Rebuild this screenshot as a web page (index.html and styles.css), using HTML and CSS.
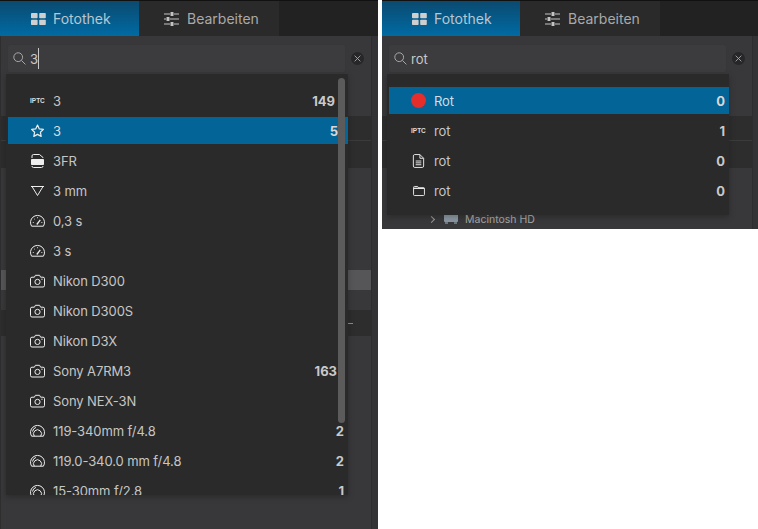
FILE: index.html
```html
<!DOCTYPE html>
<html lang="de">
<head>
<meta charset="utf-8">
<title>Fotothek</title>
<link rel="stylesheet" href="styles.css">
</head>
<body>
<svg class="defs" aria-hidden="true">
  <symbol id="i-grid" viewBox="0 0 15 12"><rect x="0" y="0" width="6.6" height="5.2" rx=".8"/><rect x="8.2" y="0" width="6.6" height="5.2" rx=".8"/><rect x="0" y="6.8" width="6.6" height="5.2" rx=".8"/><rect x="8.2" y="6.8" width="6.6" height="5.2" rx=".8"/></symbol>
  <symbol id="i-sliders" viewBox="0 0 15 14"><path d="M0 2h6M10 2h5M0 7h2M6 7h9M0 12h6M10 12h5" fill="none" stroke="currentColor"/><rect x="6.5" y="0" width="3" height="4" rx=".6" fill="currentColor"/><rect x="2.5" y="5" width="3" height="4" rx=".6" fill="currentColor"/><rect x="6.5" y="10" width="3" height="4" rx=".6" fill="currentColor"/></symbol>
  <symbol id="i-search" viewBox="0 0 13 13"><circle cx="5.2" cy="5.2" r="4.4" fill="none" stroke="currentColor"/><path d="M8.4 8.4l4 4" stroke="currentColor" fill="none"/></symbol>
  <symbol id="i-x" viewBox="0 0 8 8"><path d="M.7.7l6.6 6.6M7.3.7L.7 7.3" stroke="currentColor" fill="none"/></symbol>
  <symbol id="i-star" viewBox="0 0 14 14"><path d="M7 1.1l1.8 3.8 4.1.5-3 2.9.8 4.1L7 10.4l-3.7 2 .8-4.1-3-2.9 4.1-.5z" fill="none" stroke="currentColor" stroke-width="1.2" stroke-linejoin="round"/></symbol>
  <symbol id="i-raw" viewBox="0 0 14 14"><path d="M1.5 4V2A1.5 1.5 0 0 1 3 .5h6l3.500 3V4M1.500 12A1.500 1.500 0 0 0 3 13.500h8a1.500 1.500 0 0 0 1.500-1.500" fill="none" stroke="currentColor"/><rect x="0.500" y="5" width="13" height="6" rx=".8" fill="currentColor"/></symbol>
  <symbol id="i-focal" viewBox="0 0 14 14"><path d="M.5 2.500h13M1.500 2.500L7 11.500l5.500-9" fill="none" stroke="currentColor"/></symbol>
  <symbol id="i-gauge" viewBox="0 0 15 12"><path d="M1.600 11.200A7 7 0 1 1 13.400 11.200z" fill="none" stroke="currentColor" stroke-linejoin="round"/><path d="M6.800 9.500l3.500-4.700" stroke="currentColor" stroke-width="1.300" fill="none"/><path d="M2.800 7.500h.9M4.200 3.800l.6.6M7.500 2.300v.9M11.400 7.500h.9" stroke="currentColor" fill="none"/></symbol>
  <symbol id="i-camera" viewBox="0 0 15 13"><path d="M2 2.700h2.400L5.400.8h4.200l1 1.900H13a1.500 1.500 0 0 1 1.500 1.500v6.800A1.500 1.500 0 0 1 13 12.500H2A1.500 1.500 0 0 1 .5 11V4.200A1.500 1.500 0 0 1 2 2.700z" fill="none" stroke="currentColor" stroke-linejoin="round"/><circle cx="7.500" cy="7.400" r="2.600" fill="none" stroke="currentColor"/><rect x="11.300" y="4.200" width="1.300" height="1" fill="currentColor"/></symbol>
  <symbol id="i-lens" viewBox="0 0 15 12"><path d="M1.600 11.200A7 7 0 1 1 13.400 11.200z" fill="none" stroke="currentColor" stroke-linejoin="round"/><path d="M4.300 11.200A4 4 0 1 1 10.700 11.200" fill="none" stroke="currentColor"/><path d="M2.500 6.500A5.200 5.200 0 0 1 6 2.400" fill="none" stroke="currentColor"/></symbol>
  <symbol id="i-doc" viewBox="0 0 12 15"><path d="M1.800.6h5.700l4 4v8.300a1.500 1.500 0 0 1-1.500 1.500H2a1.500 1.500 0 0 1-1.500-1.500V2A1.500 1.500 0 0 1 1.800.6zM7.500.6v4h4" fill="none" stroke="currentColor" stroke-linejoin="round"/><path d="M3 7.500h6M3 9.500h6M3 11.500h6" stroke="currentColor" fill="none"/></symbol>
  <symbol id="i-folder" viewBox="0 0 13 11"><path d="M1.600.6h3.400l1.200 1.400h5.200a1 1 0 0 1 1 1v6.400a1 1 0 0 1-1 1H1.600a1 1 0 0 1-1-1V1.600a1 1 0 0 1 1-1z" fill="none" stroke="currentColor"/><path d="M.6 2.600h11.800" stroke="currentColor" stroke-width="1.400" fill="none"/></symbol>
</svg>

<section class="panel panel-left">
  <div class="inner">
    <nav class="tabs">
      <div class="tab tab-active"><svg class="tab-icon"><use href="#i-grid"/></svg><span>Fotothek</span></div>
      <div class="tab"><svg class="tab-icon"><use href="#i-sliders"/></svg><span>Bearbeiten</span></div>
    </nav>
    <div class="searchrow">
      <div class="search"><svg class="search-icon"><use href="#i-search"/></svg><span class="query">3</span><span class="caret"></span></div>
      <div class="clear"><svg class="clear-icon"><use href="#i-x"/></svg></div>
    </div>
    <div class="bands">
      <div class="band-dark"><div class="band-line"></div></div>
      <div class="band-gap"></div>
      <div class="band-light"></div>
      <div class="band-gap2"></div>
      <div class="band-dash"><span class="dash"></span></div>
    </div>
    <div class="dropdown dropdown-long">
      <div class="row"><span class="iptc">IPTC</span><span class="label">3</span><b class="count c-149">149</b></div>
      <div class="row row-active"><svg class="ic"><use href="#i-star"/></svg><span class="label">3</span><b class="count c-5">5</b></div>
      <div class="row"><svg class="ic"><use href="#i-raw"/></svg><span class="label">3FR</span></div>
      <div class="row"><svg class="ic"><use href="#i-focal"/></svg><span class="label">3 mm</span></div>
      <div class="row"><svg class="ic"><use href="#i-gauge"/></svg><span class="label">0,3 s</span></div>
      <div class="row"><svg class="ic"><use href="#i-gauge"/></svg><span class="label">3 s</span></div>
      <div class="row"><svg class="ic"><use href="#i-camera"/></svg><span class="label">Nikon D300</span></div>
      <div class="row"><svg class="ic"><use href="#i-camera"/></svg><span class="label">Nikon D300S</span></div>
      <div class="row"><svg class="ic"><use href="#i-camera"/></svg><span class="label">Nikon D3X</span></div>
      <div class="row"><svg class="ic"><use href="#i-camera"/></svg><span class="label">Sony A7RM3</span><b class="count c-163">163</b></div>
      <div class="row"><svg class="ic"><use href="#i-camera"/></svg><span class="label">Sony NEX-3N</span></div>
      <div class="row"><svg class="ic"><use href="#i-lens"/></svg><span class="label">119-340mm f/4.8</span><b class="count">2</b></div>
      <div class="row"><svg class="ic"><use href="#i-lens"/></svg><span class="label">119.0-340.0 mm f/4.8</span><b class="count">2</b></div>
      <div class="row"><svg class="ic"><use href="#i-lens"/></svg><span class="label">15-30mm f/2.8</span><b class="count">1</b></div>
      <div class="scrollbar"></div>
    </div>
  </div>
</section>

<section class="panel panel-right">
  <div class="inner">
    <nav class="tabs">
      <div class="tab tab-active"><svg class="tab-icon"><use href="#i-grid"/></svg><span>Fotothek</span></div>
      <div class="tab"><svg class="tab-icon"><use href="#i-sliders"/></svg><span>Bearbeiten</span></div>
    </nav>
    <div class="searchrow">
      <div class="search"><svg class="search-icon"><use href="#i-search"/></svg><span class="query">rot</span></div>
      <div class="clear"><svg class="clear-icon"><use href="#i-x"/></svg></div>
    </div>
    <div class="bands">
      <div class="band-dark"><div class="band-line"></div></div>
      <div class="tree"><span class="chev"></span><svg class="hd" viewBox="0 0 14 10"><rect x="0" y="0" width="14" height="8" rx="1" fill="#8a97a3"/><rect x="1" y="8" width="3" height="2" fill="#6d7780"/><rect x="10" y="8" width="3" height="2" fill="#6d7780"/></svg><span>Macintosh HD</span></div>
    </div>
    <div class="dropdown">
      <div class="row row-active"><span class="dot"></span><span class="label">Rot</span><b class="count">0</b></div>
      <div class="row"><span class="iptc">IPTC</span><span class="label">rot</span><b class="count">1</b></div>
      <div class="row"><svg class="ic"><use href="#i-doc"/></svg><span class="label">rot</span><b class="count">0</b></div>
      <div class="row"><svg class="ic ic-folder"><use href="#i-folder"/></svg><span class="label">rot</span><b class="count">0</b></div>
    </div>
  </div>
</section>
</body>
</html>
```

FILE: styles.css
```css
* { box-sizing: border-box; }
html, body { margin: 0; padding: 0; background: #fff; }
body {
  display: flex;
  align-items: flex-start;
  gap: 4px;
  width: 758px;
  height: 529px;
  overflow: hidden;
  font-family: Inter, "Liberation Sans", sans-serif;
  font-size: 13px;
  color: #c6c6c6;
}
.defs { position: absolute; width: 0; height: 0; }
.panel { position: relative; overflow: hidden; background: #38383a; }
.panel-left { width: 378px; height: 529px; }
.panel-right { width: 376px; height: 229px; }
.panel-right .inner { margin-left: -1px; }
.inner { position: relative; width: 378px; height: 529px; border-left: 1px solid #2e2e2e; background: #38383a; }
.inner::after { content: ""; position: absolute; top: 36px; bottom: 0; right: 0; width: 6px; background: #333335; border-left: 1px solid #2d2d2f; }

.tabs { display: flex; height: 36px; margin-left: -1px; border-top: 1px solid #111; background: #222; }
.tab { display: flex; align-items: center; width: 140px; padding-left: 31px; gap: 7px; font-size: 14px; color: #a9a9a9; background: #2a2a2a; }
.tab + .tab { padding-left: 25px; width: 140px; margin-left: 0; gap: 8px; }
.tab-active { width: 139px; color: #b9c7d1; background: linear-gradient(#0b4a70, #006ba3); }
.tab-icon { width: 15px; height: 14px; fill: #cfcfcf; color: #c4c4c4; }

.searchrow { display: flex; align-items: center; gap: 5px; padding: 8px 0 0 6px; height: 37px; }
.search { position: relative; display: flex; align-items: center; width: 339px; height: 29px; padding-left: 5px; background: #3c3c3e; border: 1px solid #373739; border-radius: 3px; }
.search-icon { width: 13px; height: 13px; color: #a8a8a8; flex: none; }
.query { margin-left: 4px; color: #c9c9c9; }
.caret { width: 1px; height: 21px; margin-left: 0; background: #c8c8c8; }
.clear { display: flex; align-items: center; justify-content: center; width: 13px; height: 13px; border-radius: 50%; background: #27272a; }
.clear-icon { width: 7px; height: 7px; color: #aaa; }

.bands { padding-top: 43px; }
.band-dark { position: relative; height: 52px; background: #2d2d2e; }
.band-line { height: 25px; border-bottom: 1px solid #3b3b3c; }
.band-gap { height: 102px; }
.band-light { height: 20px; background: #565658; }
.band-gap2 { height: 20px; }
.band-dash { position: relative; display: flex; justify-content: flex-end; align-items: center; height: 26px; padding-right: 25px; background: #2d2d2e; }
.dash { width: 8px; height: 1px; background: #8c8c8c; }

.tree { display: flex; align-items: center; height: 16px; margin-top: 43px; padding-left: 47px; font-size: 10.5px; color: #a8a8a8; }
.chev { width: 5px; height: 5px; margin-right: 10px; border-top: 1px solid #999; border-right: 1px solid #999; transform: rotate(45deg); }
.hd { width: 14px; height: 10px; margin-right: 7px; }

.dropdown {
  position: absolute;
  left: 5px;
  top: 74px;
  width: 342px;
  display: flex;
  flex-direction: column;
  gap: 3px;
  padding: 13px 0 11px 2px;
  overflow: hidden;
  background: #2a2a2a;
  box-shadow: 0 2px 6px rgba(0, 0, 0, .25);
  z-index: 2;
}
.dropdown-long { height: 421px; }
.row { position: relative; display: flex; align-items: center; flex: none; height: 27px; padding-left: 22px; }
.row-active { background: #026497; color: #d4dde3; }
.ic { width: 15px; height: 14px; flex: none; color: #eee; }
.ic-folder { width: 12px; margin: 0 1.5px; }
.iptc { width: 15px; flex: none; font-family: "Liberation Sans", sans-serif; font-size: 6.5px; font-weight: 700; color: #ddd; }
.dot { width: 15px; height: 15px; flex: none; border-radius: 50%; background: #e52d2c; }
.label { margin-left: 8px; font-size: 13px; letter-spacing: -.1px; }
.count { margin-left: auto; padding-right: 4px; font-size: 13px; font-weight: 700; color: #c9c9c9; }
.c-149 { padding-right: 13px; }
.c-163 { padding-right: 11px; }
.c-5 { padding-right: 10px; }
.row-active .count { color: #d8d8d8; }
.scrollbar { position: absolute; left: 332px; top: 4px; width: 7px; height: 345px; border-radius: 4px; background: #5b5b5b; }
```
